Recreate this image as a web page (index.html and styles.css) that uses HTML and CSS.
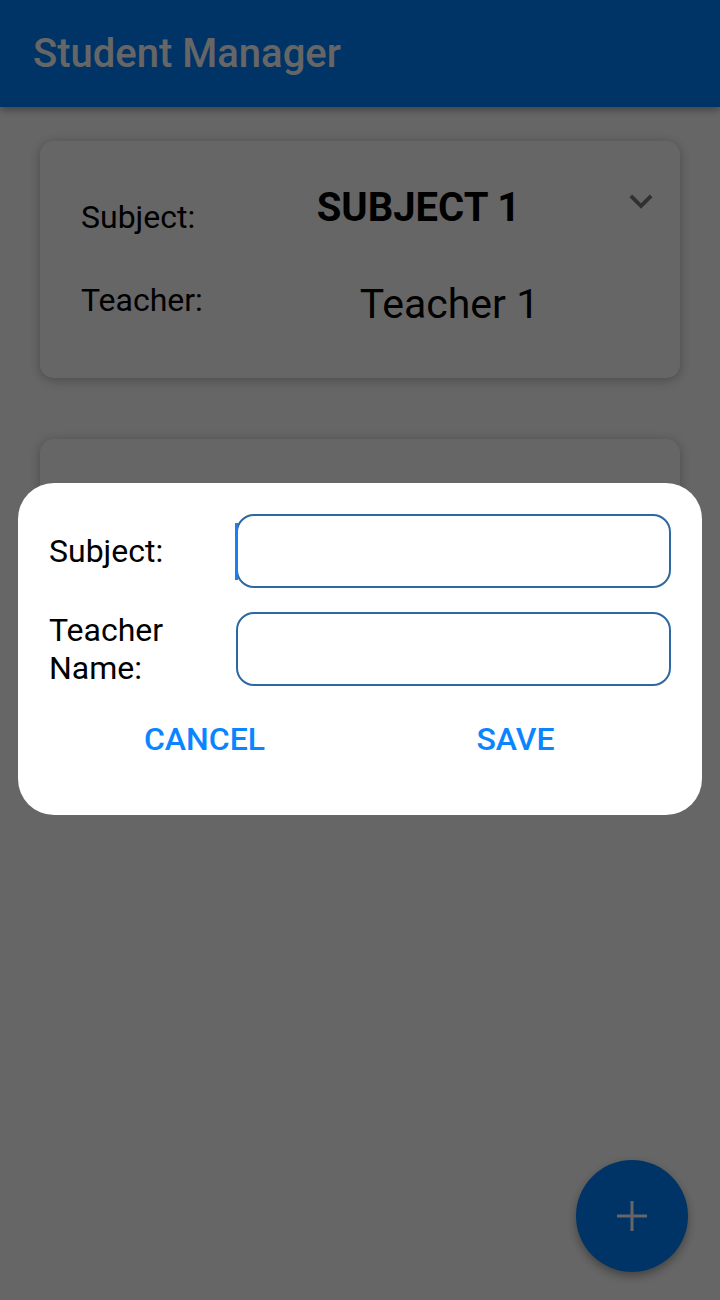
FILE: index.html
```html
<!DOCTYPE html>
<html>
<head>
<meta charset="utf-8">
<link rel="stylesheet" href="styles.css">
</head>
<body>
<div class="app">
  <header class="appbar">
    <h1 class="title">Student Manager</h1>
  </header>
  <main class="list">
    <section class="card">
      <div class="row row-subject">
        <span class="label label-subject">Subject:</span>
        <span class="subject-value">SUBJECT 1</span>
        <svg class="chevron" viewBox="0 0 24 24" width="46" height="46"><path d="M16.59 8.59L12 13.17 7.41 8.59 6 10l6 6 6-6z" fill="currentColor"/></svg>
      </div>
      <div class="row row-teacher">
        <span class="label label-teacher">Teacher:</span>
        <span class="teacher-value">Teacher 1</span>
      </div>
    </section>
    <section class="card card-empty"></section>
  </main>
  <button class="fab" aria-label="Add">
    <svg viewBox="0 0 30 30" width="30" height="30"><path d="M15 0v30M0 15h30" stroke="currentColor" stroke-width="3"/></svg>
  </button>
  <div class="scrim"></div>
  <div class="dialog">
    <div class="field">
      <label class="field-label">Subject:</label>
      <div class="input focused"><span class="caret"></span></div>
    </div>
    <div class="field field-second">
      <label class="field-label">Teacher Name:</label>
      <div class="input"></div>
    </div>
    <div class="actions">
      <button class="action">CANCEL</button>
      <button class="action">SAVE</button>
    </div>
  </div>
</div>
</body>
</html>
```

FILE: styles.css
```css
* { box-sizing: border-box; }
html, body { margin: 0; padding: 0; }
body {
  width: 720px;
  height: 1300px;
  background: #ffffff;
  font-family: Roboto, "Noto Sans", sans-serif;
  overflow: hidden;
}
.app {
  position: relative;
  width: 720px;
  height: 1300px;
  background: #ffffff;
}
.appbar {
  position: relative;
  z-index: 1;
  height: 107px;
  background: #0080ff;
  padding-left: 33px;
  box-shadow: 0 3px 8px rgba(0,0,0,0.35);
}
.title {
  margin: 0;
  font-size: 40px;
  font-weight: 500;
  line-height: 107px;
  color: #ffffff;
}
.list {
  padding: 34px 40px 0;
  display: flex;
  flex-direction: column;
  gap: 61px;
}
.card {
  height: 237px;
  background: #ffffff;
  border-radius: 14px;
  box-shadow: 0 2px 12px rgba(0,0,0,0.28);
  padding: 37px 16px 0 41px;
  color: #000;
}
.row { display: flex; align-items: flex-start; }
.label {
  width: 138px;
  font-size: 32px;
  line-height: 36px;
  flex: none;
}
.label-subject { margin-top: 21px; }
.subject-value {
  flex: 1;
  text-align: center;
  font-size: 40px;
  font-weight: 700;
  line-height: 44px;
  margin-top: 8px;
}
.chevron { flex: none; color: #7c7c7c; }
.row-teacher { margin-top: 45px; margin-right: -16px; }
.label-teacher { margin-top: 2px; }
.teacher-value {
  flex: 1;
  text-align: center;
  font-size: 41px;
  line-height: 48px;
}
.fab {
  position: absolute;
  right: 32px;
  bottom: 28px;
  width: 112px;
  height: 112px;
  border-radius: 50%;
  border: none;
  background: #0080ff;
  color: #ffffff;
  display: flex;
  align-items: center;
  justify-content: center;
  padding: 0;
  box-shadow: 0 4px 10px rgba(0,0,0,0.35);
}
.scrim {
  position: absolute;
  z-index: 2;
  inset: 0;
  background: rgba(0,0,0,0.6);
}
.dialog {
  position: absolute;
  z-index: 3;
  left: 18px;
  top: 483px;
  width: 684px;
  height: 332px;
  background: #ffffff;
  border-radius: 36px;
  padding: 31px 31px 0;
}
.field {
  display: flex;
  align-items: center;
  gap: 37px;
}
.field-second { margin-top: 23px; }
.field-label {
  width: 150px;
  flex: none;
  font-size: 32px;
  line-height: 38px;
  color: #000;
}
.input {
  position: relative;
  flex: 1;
  height: 74px;
  border: 2px solid #2d68a3;
  border-radius: 18px;
  background: #fff;
}
.caret {
  position: absolute;
  left: -3px;
  top: 7px;
  width: 3px;
  height: 57px;
  background: #1a7ff0;
}
.actions {
  display: flex;
  margin-top: 34px;
}
.action {
  flex: 1;
  border: none;
  background: none;
  padding: 0;
  font-family: Roboto, "Noto Sans", sans-serif;
  font-size: 32px;
  font-weight: 500;
  line-height: 36px;
  color: #0a84ff;
}
```
